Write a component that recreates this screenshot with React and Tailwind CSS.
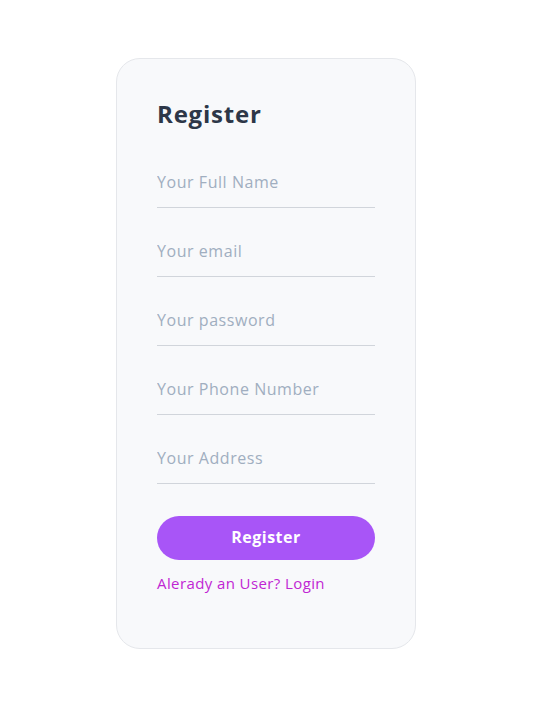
import React from "react";

const fields = [
  "Your Full Name",
  "Your email",
  "Your password",
  "Your Phone Number",
  "Your Address",
];

export default function App() {
  return (
    <div className="min-h-[716px] bg-white" style={{ fontFamily: '"Open Sans", sans-serif' }}>
      <div className="pt-[58px] pl-[116px]">
        <div className="w-[300px] h-[591px] rounded-[24px] border border-[#e5e7eb] bg-[#f8f9fb] px-[40px] pt-[39px]">
          <h1 className="text-[24px] leading-[32px] font-bold tracking-[0.8px] text-[#2d3748]">Register</h1>
          <form className="mt-[9px] flex flex-col" onSubmit={(e) => e.preventDefault()}>
            {fields.map((f) => (
              <input
                key={f}
                type="text"
                placeholder={f}
                className="w-full bg-transparent border-b border-[#d1d5db] pt-[31px] pb-[13px] text-[16px] leading-[24px] tracking-[0.55px] text-[#2d3748] placeholder:text-[#a0aec0] outline-none"
              />
            ))}
            <button
              type="submit"
              className="mt-[32px] h-[44px] w-full rounded-full bg-[#a855f7] pb-[2px] text-white text-[16px] font-bold tracking-[0.5px]"
            >
              Register
            </button>
            <a href="#" className="mt-[12px] text-[15px] leading-[22px] tracking-[0.4px] text-[#c026d3]">
              Alerady an User? Login
            </a>
          </form>
        </div>
      </div>
    </div>
  );
}
